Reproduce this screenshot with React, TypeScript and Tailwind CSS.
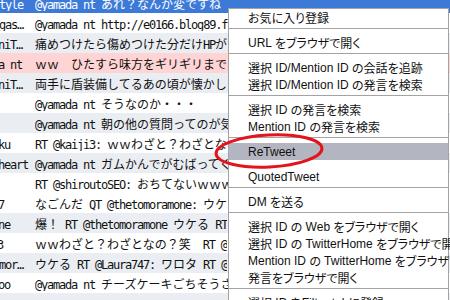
import React from "react";

type Row = { name: string; nameCls: string; msg: string; bg: string; text?: string };

const rows: Row[] = [
  { name: "style", nameCls: "-ml-[7px]", msg: "@yamada_nt あれ？なんか変ですね", bg: "bg-[#3d7ad8]", text: "text-white" },
  { name: "gas…", nameCls: "-ml-[1px]", msg: "@yamada_nt http://e0166.blog89.fc2.com/", bg: "bg-white" },
  { name: "niT…", nameCls: "-ml-[2px]", msg: "痛めつけたら傷めつけた分だけHPが", bg: "bg-[#eaedf2]" },
  { name: "a_nt", nameCls: "-ml-[2px]", msg: "ｗｗ　ひたすら味方をギリギリまで", bg: "bg-[#ffd4d4]" },
  { name: "niT…", nameCls: "-ml-[2px]", msg: "両手に盾装備してるあの頃が懐かし", bg: "bg-[#eaedf2]" },
  { name: "", nameCls: "", msg: "@yamada_nt そうなのか・・・", bg: "bg-white" },
  { name: "", nameCls: "", msg: "@yamada_nt 朝の他の質問ってのが気", bg: "bg-[#eaedf2]" },
  { name: "ku_", nameCls: "-ml-[2px]", msg: "RT @kaiji3: ｗｗわざと？わざとな", bg: "bg-white" },
  { name: "heart", nameCls: "-ml-[2px]", msg: "@yamada_nt ガムかんでがむばってく", bg: "bg-[#eaedf2]" },
  { name: "", nameCls: "", msg: "RT @shiroutoSEO: おちてないｗｗｗ", bg: "bg-white" },
  { name: "7", nameCls: "-ml-[2px]", msg: "なごんだ QT @thetomoramone: ウケ", bg: "bg-white" },
  { name: "ne", nameCls: "-ml-[2px]", msg: "爆！ RT @thetomoramone ウケる RT", bg: "bg-[#eaedf2]" },
  { name: "3", nameCls: "-ml-[3px]", msg: "ｗｗわざと？わざとなの？笑　RT @", bg: "bg-white" },
  { name: "mor…", nameCls: "-ml-[1px]", msg: "ウケる RT @Laura747: ワロタ RT @", bg: "bg-[#eaedf2]" },
  { name: "oo", nameCls: "-ml-[2px]", msg: "@yamada_nt チーズケーキごちそうさ", bg: "bg-white" },
  { name: "", nameCls: "", msg: "", bg: "bg-[#eaedf2]" },
];

const HALF = /[\x20-\x7e…]+|[^\x20-\x7e…]+/g;

/** splits text into half-width and full-width runs so latin stays 6px wide. */
function Mixed({ text }: { text: string }) {
  const parts = text.match(HALF) ?? [];
  return (
    <>
      {parts.map((p, i) =>
        /[\x20-\x7e…]/.test(p[0]) ? (
          <span key={i} className="font-['DejaVu_Sans_Mono',monospace] text-[12px] tracking-[-1.22px]">
            {p}
          </span>
        ) : (
          <span key={i} className="font-['Noto_Sans_CJK_JP',sans-serif] text-[12px]">
            {p}
          </span>
        )
      )}
    </>
  );
}

/** menu label: proportional latin, proportional kana. */
function MenuLabel({ text }: { text: string }) {
  const parts = text.match(HALF) ?? [];
  return (
    <>
      {parts.map((p, i) =>
        /[\x20-\x7e]/.test(p[0]) ? (
          <span key={i} className="font-['Liberation_Sans',sans-serif] text-[12px]">
            {p}
          </span>
        ) : (
          <span key={i} className="font-['Noto_Sans_CJK_JP',sans-serif] text-[12px] [font-feature-settings:'palt']">
            {p}
          </span>
        )
      )}
    </>
  );
}

type Item = { kind: "item"; label: string; active?: boolean } | { kind: "sep" } | { kind: "gap" };

const menu: Item[] = [
  { kind: "item", label: "お気に入り登録" },
  { kind: "sep" },
  { kind: "item", label: "URL をブラウザで開く" },
  { kind: "sep" },
  { kind: "item", label: "選択 ID/Mention ID の会話を追跡" },
  { kind: "item", label: "選択 ID/Mention ID の発言を検索" },
  { kind: "sep" },
  { kind: "item", label: "選択 ID の発言を検索" },
  { kind: "item", label: "Mention ID の発言を検索" },
  { kind: "sep" },
  { kind: "item", label: "ReTweet", active: true },
  { kind: "gap" },
  { kind: "item", label: "QuotedTweet" },
  { kind: "sep" },
  { kind: "item", label: "DM を送る" },
  { kind: "sep" },
  { kind: "item", label: "選択 ID の Web をブラウザで開く" },
  { kind: "item", label: "選択 ID の TwitterHome をブラウザで開く" },
  { kind: "item", label: "Mention ID の TwitterHome をブラウザで開く" },
  { kind: "item", label: "発言をブラウザで開く" },
  { kind: "sep" },
  { kind: "item", label: "選択 ID をFilter tabに登録" },
];

function TweetRow({ row }: { row: Row }) {
  return (
    <div className={`flex h-[20px] items-center whitespace-pre leading-none ${row.bg} ${row.text ?? "text-[#111]"}`}>
      <div className="w-[35px] shrink-0 overflow-hidden">
        <div className={row.nameCls}>
          <Mixed text={row.name} />
        </div>
      </div>
      <div className="overflow-hidden">
        <Mixed text={row.msg} />
      </div>
    </div>
  );
}

function ContextMenu() {
  return (
    <div className="absolute left-[228px] top-[8px] w-[221px] border-x border-t border-[#a3a3a3] bg-white text-[#111] leading-none">
      {menu.map((it, i) => {
        if (it.kind === "sep") {
          return (
            <div key={i} className="h-[8px] pt-[2px]">
              <div className="h-px bg-[#a3a3a3]" />
            </div>
          );
        }
        if (it.kind === "gap") return <div key={i} className="h-[8px]" />;
        return (
          <div
            key={i}
            className={`flex h-[17px] items-center whitespace-pre pl-[19px] ${it.active ? "bg-[#b3b5c0]" : ""}`}
          >
            <MenuLabel text={it.label} />
          </div>
        );
      })}
    </div>
  );
}

export default function App() {
  return (
    <div className="relative h-[300px] w-[450px] overflow-hidden bg-white">
      <div className="-mt-[7px]">
        {rows.map((r, i) => (
          <TweetRow key={i} row={r} />
        ))}
      </div>
      <ContextMenu />
      <svg className="absolute left-[210px] top-[128px]" width="120" height="48" viewBox="0 0 120 48">
        <ellipse cx="59" cy="23" rx="53" ry="16" fill="none" stroke="#e3141b" strokeWidth="3" transform="rotate(-3 59 23)" />
      </svg>
    </div>
  );
}
